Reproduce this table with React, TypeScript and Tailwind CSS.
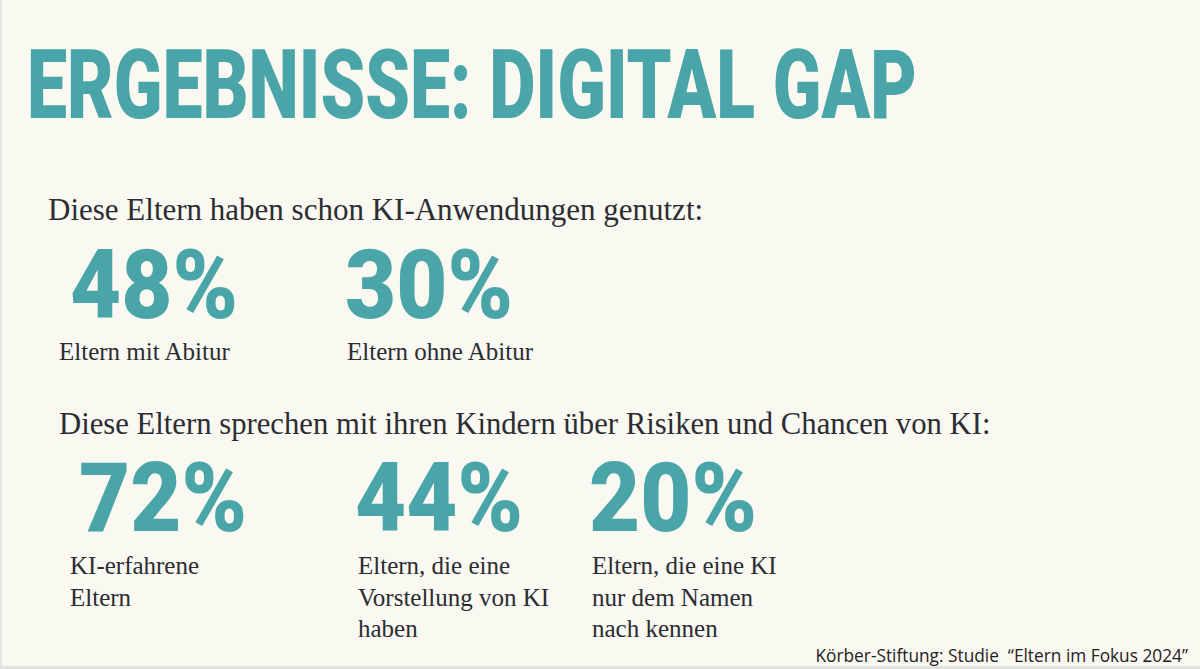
import React from "react";

const numCls =
  "h-[72px] text-[96px] leading-[72px] font-black text-[#4aa5a8] font-['Roboto',sans-serif] whitespace-nowrap origin-left scale-x-[0.92]";
const labelCls =
  "text-[25px] text-[#2b2d33] font-['Liberation_Serif',serif] whitespace-nowrap";
const headCls =
  "h-[36px] leading-[36px] text-[#2b2d33] font-['Liberation_Serif',serif] whitespace-nowrap";

export default function App() {
  return (
    <div className="w-[1200px] h-[669px] overflow-hidden bg-[#f9f8f1] border-l-2 border-l-[#e6e6e3] border-b-[3px] border-b-[#e2e2df] flex flex-col box-border">
      <h1 className="mt-[37px] ml-[25px] h-[96px] text-[96px] leading-[96px] font-black text-[#4aa5a8] font-['Roboto',sans-serif] whitespace-nowrap origin-left scale-x-[0.745]">
        ERGEBNISSE: DIGITAL GAP
      </h1>

      <div className={`mt-[59px] ml-[46px] text-[31px] ${headCls}`}>
        Diese Eltern haben schon KI-Anwendungen genutzt:
      </div>

      <div className="mt-[21px] ml-[57px] flex">
        <div className="w-[288px] flex flex-col">
          <div className={`${numCls} ml-[11px]`}>48%</div>
          <div className={`mt-[16px] leading-[30px] ${labelCls}`}>Eltern mit Abitur</div>
        </div>
        <div className="flex flex-col">
          <div className={`${numCls} -ml-[2px]`}>30%</div>
          <div className={`mt-[16px] leading-[30px] ${labelCls}`}>Eltern ohne Abitur</div>
        </div>
      </div>

      <div className={`mt-[39px] ml-[57px] text-[30.7px] ${headCls}`}>
        Diese Eltern sprechen mit ihren Kindern über Risiken und Chancen von KI:
      </div>

      <div className="mt-[20px] ml-[68px] flex">
        <div className="w-[288px] flex flex-col">
          <div className={`${numCls} ml-[9px]`}>72%</div>
          <div className={`mt-[16px] leading-[31.5px] ${labelCls}`}>
            KI-erfahrene
            <br />
            Eltern
          </div>
        </div>
        <div className="w-[234px] flex flex-col">
          <div className={`${numCls} -ml-[3px]`}>44%</div>
          <div className={`mt-[16px] leading-[31.5px] ${labelCls}`}>
            Eltern, die eine
            <br />
            Vorstellung von KI
            <br />
            haben
          </div>
        </div>
        <div className="flex flex-col">
          <div className={`${numCls} -ml-[3px]`}>20%</div>
          <div className={`mt-[16px] leading-[31.5px] ${labelCls}`}>
            Eltern, die eine KI
            <br />
            nur dem Namen
            <br />
            nach kennen
          </div>
        </div>
      </div>

      <div className="mt-[1px] self-end mr-[12px] h-[20px] text-[17.3px] leading-[20px] text-[#1f2023] font-['Open_Sans',sans-serif] whitespace-pre">
        {"Körber-Stiftung: Studie  “Eltern im Fokus 2024”"}
      </div>
    </div>
  );
}
